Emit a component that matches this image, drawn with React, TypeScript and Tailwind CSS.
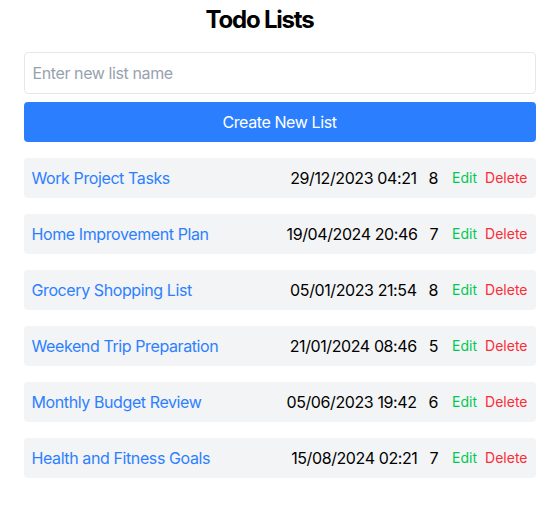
const lists = [
  { name: 'Work Project Tasks', date: '29/12/2023 04:21', count: 8 },
  { name: 'Home Improvement Plan', date: '19/04/2024 20:46', count: 7 },
  { name: 'Grocery Shopping List', date: '05/01/2023 21:54', count: 8 },
  { name: 'Weekend Trip Preparation', date: '21/01/2024 08:46', count: 5 },
  { name: 'Monthly Budget Review', date: '05/06/2023 19:42', count: 6 },
  { name: 'Health and Fitness Goals', date: '15/08/2024 02:21', count: 7 },
]

export default function App() {
  return (
    <div className="min-h-screen bg-white font-['Inter',sans-serif] tracking-[-0.025em] text-black">
      <div className="mx-auto max-w-lg pt-1">
        <h1 className="mb-4 pr-10 text-center text-2xl font-bold tracking-[-0.05em]">Todo Lists</h1>

        {/* New list form */}
        <input
          type="text"
          placeholder="Enter new list name"
          className="mb-2 w-full rounded border border-gray-200 px-2 py-2 text-base placeholder:text-gray-400"
        />
        <button className="w-full rounded bg-blue-500 py-2 text-base text-white">
          Create New List
        </button>

        {/* Lists */}
        <ul className="mt-4 space-y-4">
          {lists.map((list) => (
            <li
              key={list.name}
              className="flex items-center justify-between rounded bg-gray-100 px-2 py-2"
            >
              <a href="#" className="text-blue-500">
                {list.name}
              </a>
              <div className="flex items-center">
                <span>{list.date}</span>
                <span className="ml-3">{list.count}</span>
                <button className="ml-3.5 text-sm tracking-normal text-green-500">Edit</button>
                <button className="ml-2 text-sm tracking-normal text-red-500">Delete</button>
              </div>
            </li>
          ))}
        </ul>
      </div>
    </div>
  )
}
